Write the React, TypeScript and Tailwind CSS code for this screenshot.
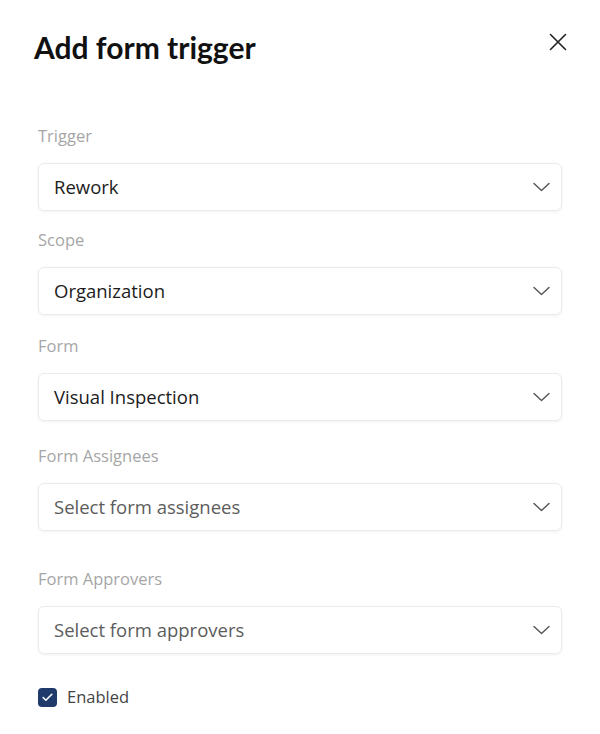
import { Check } from "lucide-react";

type Field = {
  label: string;
  value: string;
  placeholder?: boolean;
  gap: string;
};

const fields: Field[] = [
  { label: "Trigger", value: "Rework", gap: "mt-[60px]" },
  { label: "Scope", value: "Organization", gap: "mt-[19px]" },
  { label: "Form", value: "Visual Inspection", gap: "mt-[21px]" },
  { label: "Form Assignees", value: "Select form assignees", placeholder: true, gap: "mt-[25px]" },
  { label: "Form Approvers", value: "Select form approvers", placeholder: true, gap: "mt-[38px]" },
];

const Chevron = () => (
  <svg width="17" height="10" viewBox="0 0 17 10" fill="none" className="text-[#555]">
    <path d="M1 1.5 L8.5 8.5 L16 1.5" stroke="currentColor" strokeWidth="1.4" strokeLinecap="round" strokeLinejoin="round" />
  </svg>
);

const SelectBox = ({ field }: { field: Field }) => (
  <div className={field.gap}>
    <label className="block text-[16.5px] leading-[20px] text-[#a6a6a6]">
      {field.label}
    </label>
    <button
      type="button"
      className="mt-[17px] w-full h-[48px] flex items-center justify-between pl-[15px] pr-[11px] bg-white border border-[#ebebeb] rounded-[6px] shadow-[0_1px_3px_rgba(0,0,0,0.06)]"
    >
      <span
        className={
          field.placeholder
            ? "text-[18.5px] text-[#5c5c5c]"
            : "text-[18.5px] text-[#1c1c1c]"
        }
      >
        {field.value}
      </span>
      <Chevron />
    </button>
  </div>
);

export default function App() {
  return (
    <div
      className="w-[600px] h-[734px] bg-white px-[38px] pt-[28px] flex flex-col"
      style={{ fontFamily: "'Open Sans', 'Noto Sans', sans-serif" }}
    >
      <div className="flex items-start justify-between -ml-[4px] -mr-[5px]">
        <h1
          className="text-[30px] leading-[38px] font-bold text-[#111]"
          style={{ fontFamily: "Lato, sans-serif" }}
        >
          Add form trigger
        </h1>
        <button type="button" className="mt-[5px] text-[#222]">
          <svg width="18" height="18" viewBox="0 0 18 18" fill="none">
            <path d="M1.5 1.5 L16.5 16.5 M16.5 1.5 L1.5 16.5" stroke="currentColor" strokeWidth="1.6" strokeLinecap="round" />
          </svg>
        </button>
      </div>

      <div className="flex flex-col">
        {fields.map((f) => (
          <SelectBox key={f.label} field={f} />
        ))}
      </div>

      <label className="mt-[31px] flex items-center gap-[10px]">
        <span className="w-[19px] h-[19px] rounded-[4px] bg-[#1f3a6b] flex items-center justify-center">
          <Check className="w-[13px] h-[13px] text-white" strokeWidth={3} />
        </span>
        <span className="text-[16.5px] text-[#444]">Enabled</span>
      </label>
    </div>
  );
}
